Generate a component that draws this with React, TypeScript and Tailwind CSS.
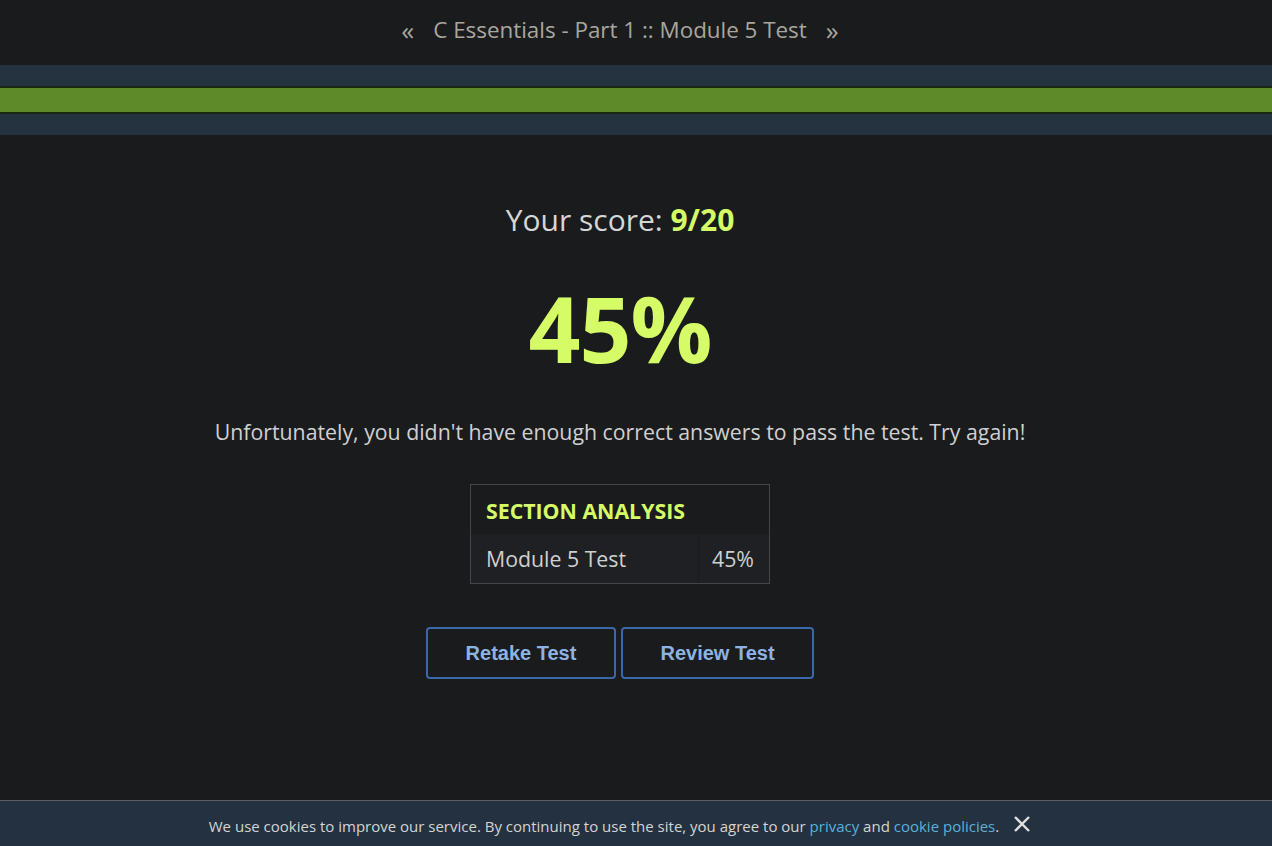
export default function App() {
  return (
    <div className="relative flex h-[846px] w-full flex-col overflow-hidden bg-[#1a1b1d] font-['Open_Sans',sans-serif]">
      <header className="flex h-[65px] items-center justify-center gap-[19px] pr-[32px] pb-[6px] text-[22.4px] text-[#aaa69d]">
        <span className="text-[26px] leading-none">«</span>
        <span>C Essentials - Part 1 :: Module 5 Test</span>
        <span className="text-[26px] leading-none">»</span>
      </header>

      <div className="flex h-[70px] flex-col justify-center bg-[#253341]">
        <div className="h-[28px] w-full border-y-2 border-[#1a2a10] bg-[#5e8a29]" />
      </div>

      <main className="flex flex-col items-center pr-[32px]">
        <p className="mt-[65px] text-[30px] leading-[40px] text-[#d6d6d6]">
          Your score: <span className="font-bold text-[#d5fb67]">9/20</span>
        </p>
        <p className="mt-[26px] text-[91px] font-bold leading-[124px] tracking-[-1px] text-[#d5fb67]">45%</p>
        <p className="mt-[28px] text-[21.3px] leading-[28px] text-[#d0d0d0]">
          Unfortunately, you didn't have enough correct answers to pass the test. Try again!
        </p>

        <div className="mt-[38px] w-[300px] border border-[#464646]">
          <div className="px-[15px] pt-[12px] pb-[9px] text-[21.3px] font-bold leading-[28px] text-[#d5fb67]">
            SECTION ANALYSIS
          </div>
          <div className="flex bg-[#1e2023] text-[21.3px] leading-[49px] text-[#d0d0d0]">
            <span className="flex-1 px-[15px]">Module 5 Test</span>
            <span className="w-[71px] border-l border-[#1a1b1d] pl-[13px]">45%</span>
          </div>
        </div>

        <div className="mt-[43px] flex gap-[5px] font-['Liberation_Sans',Arial,sans-serif] text-[20px] font-bold text-[#8cb3e3]">
          <button className="h-[52px] w-[190px] rounded-[4px] border-2 border-[#3b68a6]">Retake Test</button>
          <button className="h-[52px] w-[193px] rounded-[4px] border-2 border-[#3b68a6]">Review Test</button>
        </div>
      </main>

      <div className="absolute bottom-0 left-0 flex h-[46px] w-full items-center justify-center border-t border-[#5a5f66] bg-[#243140] pr-[32px] pt-[6px] text-[15px] text-[#d4d4d4]">
        <span>
          We use cookies to improve our service. By continuing to use the site, you agree to our{" "}
          <a className="text-[#5bb0d9]">privacy</a> and <a className="text-[#5bb0d9]">cookie policies</a>.
        </span>
        <svg className="ml-[14px] mb-[6px]" width="18" height="18" viewBox="0 0 18 18">
          <path d="M2 2 L16 16 M16 2 L2 16" stroke="#e0e0e0" strokeWidth="2.4" />
        </svg>
      </div>
    </div>
  );
}
